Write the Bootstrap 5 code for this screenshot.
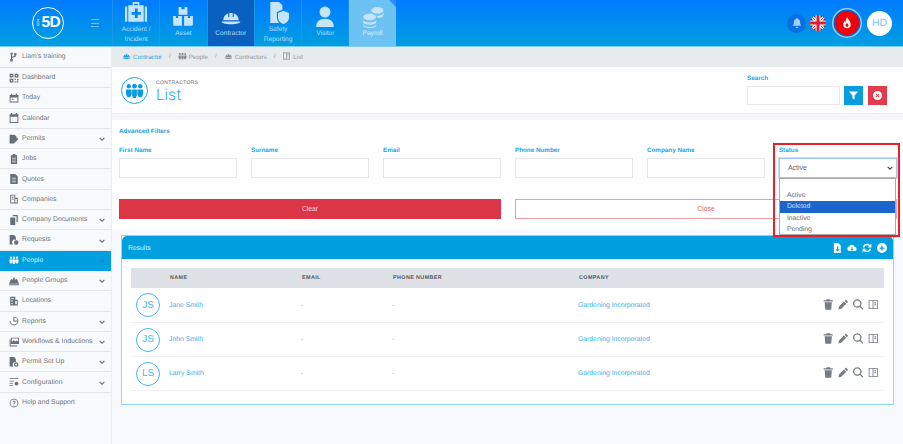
<!DOCTYPE html>
<html lang="en">
<head>
<meta charset="utf-8">
<title>Contractors List</title>
<link rel="stylesheet" href="https://cdn.jsdelivr.net/npm/bootstrap@5.3.0/dist/css/bootstrap.min.css">
<style>
html,body{height:100%;overflow:hidden}
body{font-family:"Liberation Sans",Arial,sans-serif;font-size:7px;background:#f7f9fc;color:#5b6470;width:903px;height:444px;text-rendering:geometricPrecision}
.topbar{height:47px;background:linear-gradient(180deg,#007bff 0%,#009fe0 100%);border-bottom:1px solid #7fcdf0}
.logo-zone{width:112px;padding-left:32px}
.logo-ring{width:32px;height:32px;border:1.5px solid #fff;color:#fff;font-size:15.5px;font-weight:700;letter-spacing:-.6px;padding-left:3px;flex:none}
.logo-ring i{font-style:normal;font-size:3px;writing-mode:vertical-rl;transform:rotate(180deg);font-weight:400;letter-spacing:0;margin-right:1px}
.burger{width:8px;height:8px;border-top:1px solid #7fbdf3;border-bottom:1px solid #7fbdf3;margin-left:27px;position:relative;flex:none}
.burger::after{content:"";position:absolute;left:0;right:0;top:2.500px;border-top:1px solid #7fbdf3}
.mod{width:47.3px;height:46px;border-left:1px solid #1b95e8;color:#b5def9;font-size:6.6px;line-height:10px;text-align:center}
.mod svg{width:22px;height:22px;fill:#c6e5fb;flex:none}
.mod-ico{height:25px;padding-top:2px}
.mod-low{height:29px;padding-top:6px}
.mod-cap{height:20px}
.mod-dark{background:#0a60bf}
.mod-light{background:#6cc2f2;position:relative;color:#d8effc}
.mod-light::after{content:"";position:absolute;right:0;top:0;border-style:solid;border-width:0 7px 7px 0;border-color:transparent #2f8df0 transparent transparent}
.top-right{padding-right:11px}
.bell{width:19px;height:19px;background:#0a6fe4}
.bell svg{width:10px;height:10px;fill:#9fd0f8}
.flag{width:16px;height:16px;margin-left:4px;overflow:hidden}
.fire{width:24px;height:24px;background:#f00008;box-shadow:0 0 0 1.5px #0c5fc4,0 0 0 3px #8fd0f5;margin-left:9px}
.fire svg{width:12px;height:12px;fill:#fff}
.hd{width:25px;height:25px;background:#fff;color:#7cc4f2;font-size:10.5px;margin-left:8px;padding-top:2px}
.side{width:112px;flex:none;background:#f7f9fc;border-right:1px solid #eceef1;height:397px}
.side-item{height:20.3px;padding:1px 6px 0 9px;background:#f8f9fb;border:0;border-bottom:1px solid #e4e6e9;border-radius:0;color:#6f7780;font-size:6.8px;display:flex;align-items:center}
.side-first{border-bottom:2px solid #d7d9dc;height:21px}
.side-item svg.ico{width:10px;height:10px;margin-right:3px;margin-top:-1px;fill:#666e78;flex:none}
.side-item .chev{width:6px;height:6px;margin-left:auto;fill:none;stroke:#6b7480;stroke-width:2}
.side-on{background:#00a0e0;color:#d5effb;border-bottom-color:#00a0e0}
.side-on svg.ico{fill:#fff}
.side-on .chev{stroke:#2a7fb5}
.crumbs{height:20px;background:#e8ebee;padding-left:10px;font-size:6.2px;color:#9299a1;gap:4px}
.crumbs svg{width:9px;height:8px;fill:#868e96;margin-right:2px;vertical-align:-1px}
.crumbs .here{color:#33a5e0}
.crumbs .here svg{fill:#1a9bdc}
.crumbs .spl{margin:0 3px}
.head-zone{height:46px;background:#fff;padding:0 16px 0 9px}
.head-ring{width:27px;height:27px;border:1.2px solid #1fa5e4}
.head-ring svg{width:19px;height:19px;fill:#0d9bdf}
.head-over{font-size:5px;letter-spacing:.35px;color:#666;line-height:6px;margin-top:2px}
.head-title{font-size:16px;line-height:17px;color:#27a7e5;font-family:Roboto,"Liberation Sans",sans-serif;font-weight:300}
.lab{display:block;color:#1ea4e4;font-weight:700;font-size:6.3px;line-height:8px;margin-bottom:3px}
.lab-adv{margin-bottom:11px}
.srch-in{width:93px;height:19px;border:1px solid #e8ebee}
.sq{width:19px;height:19px;margin-left:4px;padding:0;border:0;border-radius:0}
.sq-blue{background:#0a9ddb}
.sq-red{background:#e23b4c;margin-left:5px}
.sq svg{width:9px;height:9px;fill:#fff}
.gap-band{height:7px;background:#f4f6f9;border-top:1px solid #eceef1}
.filters{height:109px;background:#fff;padding:8px 6px 0 7px}
.flt-row{--bs-gutter-x:14px;margin:0 -7px}
.flt-btns{margin-top:21px}
.flt-in{height:20px;border:1px solid #e6e8ec;border-radius:0;padding:0 8px;font-size:7px;background-color:#fff;color:#666}
.flt-sel{border-color:#9fc5f0;box-shadow:0 0 0 1px #c9e0fb;background-image:url("data:image/svg+xml,%3csvg xmlns='http://www.w3.org/2000/svg' viewBox='0 0 16 16'%3e%3cpath fill='none' stroke='%23444' stroke-width='3' d='M2 5l6 6 6-6'/%3e%3c/svg%3e");background-size:6px 6px;background-position:right 3px center}
.pick{position:absolute;left:7px;top:31px;width:117px;height:57px;background:#fff;border:1px solid #a9a9a9;padding-top:11px;box-sizing:border-box;z-index:3}
.pick div{height:11.3px;line-height:11.3px;padding-left:7px;color:#6a6a6a;font-size:6.8px}
.pick .sel{background:#1a66cc;color:#cfe0f6}
.redbox{position:absolute;left:1px;top:-4px;width:127px;height:94px;border:2px solid #e8202a;z-index:4;pointer-events:none}
.btn-clear{height:20px;background:#dc3545;color:#f7d5d8;border:0;border-radius:0;font-size:6.8px;padding:0}
.btn-close2{height:20px;background:#fff;color:#e0606c;border:1px solid #eda0a7;border-radius:0;font-size:6.8px;padding:0}
.res-wrap{padding:6px 9px 0 9px}
.res-card{height:170px;border:1px solid #8fd6f5;border-radius:0;background:#fff}
.res-head{height:23px;background:#00a0e0;color:#d6f0fc;border:0;border-radius:0;padding:0 6px;font-size:6.8px}
.res-head svg{width:10px;height:10px;fill:#fff;margin-left:5px}
.res-body{padding:9px 9px 0 9px}
.res-tbl{margin:0;font-size:6.8px;--bs-table-bg:transparent}
.res-tbl th{height:20px;background:#dee1e6;border:0;padding:1px 0 0 1px;vertical-align:middle;font-size:5.4px;letter-spacing:.4px;color:#555b63;font-weight:700}
.res-tbl td{height:34px;padding:2px 0 0;vertical-align:middle;border-bottom:1.5px solid #eff0f2;color:#9aa0a6}
.res-tbl .c1{width:38px}.res-tbl .c2{width:132px}.res-tbl .c3{width:91px}.res-tbl .c4{width:186px}
.ava{width:24px;height:24px;border:1.2px solid #45b6ee;color:#45b6ee;font-size:10px;margin-left:5px;margin-top:-1px}
.who{color:#3cb0e8;text-decoration:none}
.acts{padding-right:6px!important;text-align:right}
.acts svg{width:10.500px;height:11px;fill:#767d85;margin-left:4.500px;vertical-align:middle;margin-top:-2px}
</style>
</head>
<body>
<svg width="0" height="0" class="position-absolute">
<symbol id="i-people" viewBox="0 0 20 16"><circle cx="4" cy="3.5" r="2.3"/><circle cx="10" cy="3.5" r="2.5"/><circle cx="16" cy="3.5" r="2.3"/><path d="M1 7h6v5l-1.500 3h-3L1 12zM7.500 7h5v6l-1 3h-3l-1-3zM13 7h6v5l-1.500 3h-3L13 12z"/></symbol>
<symbol id="i-hat" viewBox="0 0 20 16"><path d="M3 11a7 7 0 0 1 4.500-6.500V8h1V4.300h3V8h1V4.500A7 7 0 0 1 17 11zM1.500 12h17c0 1.500-3 2.500-8.500 2.500S1.500 13.500 1.500 12z"/></symbol>
<symbol id="i-grid" viewBox="0 0 16 16"><path d="M1 1h6v6H1zm2 2v2h2V3zm6-2h6v6H9zm2 2v2h2V3zM1 9h6v6H1zm2 2v2h2v-2zm6-2h2v2H9zm4 0h2v3h-2zm-4 4h2v2H9zm3 0h3v2h-3z"/></symbol>
<symbol id="i-branch" viewBox="0 0 16 16"><path d="M3 1h3v3H5v3.500c1.500-.8 3-1 4-1.500V5H8V2h4v3h-1v2c-2 1-5 1-6 3v1h1v4H2v-4h1V4H2z"/></symbol>
<symbol id="i-cal2" viewBox="0 0 16 16"><path d="M3 1h2v2h6V1h2v2h2v12H1V3h2zM2.500 7v6.500h11V7zM5 9h2v2H5z"/></symbol>
<symbol id="i-cal" viewBox="0 0 16 16"><path d="M3 0h2v2h6V0h2v2h2v14H1V2h2zM2.500 6v8.500h11V6z"/></symbol>
<symbol id="i-permit" viewBox="0 0 16 16"><path d="M1 1h8l3 3v3L7 12v3H1zM13 6l2 2-7 7H6v-2z"/></symbol>
<symbol id="i-clip" viewBox="0 0 16 16"><path d="M6 0h4v2h3v14H3V2h3zM5 6v1h6V6zm0 3v1h6V9zm0 3v1h6v-1z"/></symbol>
<symbol id="i-doc" viewBox="0 0 16 16"><path d="M2 0h8l4 4v12H2zM5 6v1h6V6zm0 3v1h6V9zm0 3v1h6v-1z"/></symbol>
<symbol id="i-comp" viewBox="0 0 16 16"><path d="M2 1h8v5h4v9H2zm1.500 1.500V13.500h5V2.500zM5 4h2v2H5zm0 3h2v2H5zm5 1v5.500h2.500V8z"/></symbol>
<symbol id="i-docs" viewBox="0 0 16 16"><path d="M6 0h8v11h-2V2H6zM2 4h8v12H2z"/></symbol>
<symbol id="i-req" viewBox="0 0 16 16"><path d="M1 0h7l3 3v5a4 4 0 0 0-4 7H1z"/><circle cx="11.500" cy="12" r="3.500"/></symbol>
<symbol id="i-group" viewBox="0 0 18 16"><path d="M9 1l3 5 2-2 4 9H0l4-9 2 2zM0 14h18v1.500H0z"/></symbol>
<symbol id="i-loc" viewBox="0 0 16 16"><path d="M2 1h8v5h4v9H2zm2 2v2h2V3zm3 0v2h1V3zM4 7v2h2V7zm0 4v2h2v-2zm6-3v5h2.500V8z" fill-rule="evenodd"/></symbol>
<symbol id="i-rep" viewBox="0 0 16 16"><path d="M8 1a7 7 0 1 1-7 7h1.500A5.500 5.500 0 1 0 8 2.500zM7 1v7.800h7V7.300H8.500V1z"/></symbol>
<symbol id="i-img" viewBox="0 0 16 16"><path d="M3 1h13v10H3zm1.500 1.500v5l3-2.500 2.500 2 2-1.500 2.500 2v-5zM1 4v11h12v-1.500H2.500V4z"/></symbol>
<symbol id="i-set" viewBox="0 0 16 16"><path d="M1 0h7l3 3v5.200a4 4 0 0 0-3.800 6.800H1z"/><path d="M11.500 8.500a3.500 3.500 0 1 0 0 7 3.500 3.500 0 0 0 0-7zm0 2a1.500 1.500 0 1 1 0 3 1.500 1.500 0 0 1 0-3z" fill-rule="evenodd"/></symbol>
<symbol id="i-cfg" viewBox="0 0 16 16"><path d="M1 2h14v1.300H1zm0 4h7v1.300H1zm0 4h5v1.300H1zm0 3h5v1.300H1z"/><circle cx="12" cy="10.500" r="3"/></symbol>
<symbol id="i-help" viewBox="0 0 16 16"><path d="M8 1a7 7 0 1 1 0 14A7 7 0 0 1 8 1zm0 1.300a5.700 5.700 0 1 0 0 11.400A5.700 5.700 0 0 0 8 2.300zM5.800 6.300C6 5 7 4.300 8.200 4.300c1.300 0 2.300.8 2.300 2 0 1.800-1.900 1.700-1.900 3.200H7.300c0-2.100 1.900-2 1.900-3.200 0-.5-.4-.8-1-.8s-1 .3-1.100.8zM7.300 10.500h1.300v1.300H7.300z"/></symbol>
<symbol id="i-chev" viewBox="0 0 10 10"><path d="M1 3l4 4 4-4"/></symbol>
<symbol id="i-trash" viewBox="0 0 16 16"><path d="M5.500 0h5l.7 1.500H15V3.500H1V1.500h3.800zM2.500 4.500h11L12.500 16h-9z"/></symbol>
<symbol id="i-pen" viewBox="0 0 16 16"><path d="M12 .5l3.500 3.500-2 2L10 2.500zM9 3.500L12.500 7 5 14.500 .5 15.500 1.500 11z"/></symbol>
<symbol id="i-search" viewBox="0 0 16 16"><path d="M6.500 0a6.500 6.500 0 0 1 5.200 10.400l4.300 4.200-1.400 1.400-4.200-4.300A6.500 6.500 0 1 1 6.500 0zm0 2a4.500 4.500 0 1 0 0 9 4.500 4.500 0 0 0 0-9z"/></symbol>
<symbol id="i-cols" viewBox="0 0 16 16"><path d="M1 1h14v14H1zm1.300 1.300v11.400h4.700V2.300zm6 0v11.400h5.400V2.300zM10 4h2v2h-2zm0 3h2v2h-2z" fill-rule="evenodd"/></symbol>
</svg>

<header class="topbar d-flex align-items-start">
  <div class="logo-zone d-flex align-items-center h-100">
    <div class="logo-ring rounded-circle d-flex align-items-center"><i>NOW</i>5D</div>
    <div class="burger"></div>
  </div>
  <div class="mod"><div class="mod-ico"><svg viewBox="0 0 20 20"><path d="M7 0h6v3h4v15H3V3h4zM8.300 1.500V3h3.400V1.500zM9 6v3H6v2.500h3v3h2.500v-3h3V9h-3V6zM0 4h2v14H0zM18 4h2v14h-2z" fill-rule="evenodd"/></svg></div><div class="mod-cap">Accident /<br>Incident</div></div>
  <div class="mod"><div class="mod-ico mod-low"><svg viewBox="0 0 20 20"><path d="M6 1h2.500v2h3V1H14v7H6zM1 9h2.500v2h2V9H9v9H2a1 1 0 0 1-1-1zM11 9h3.500v2h2V9H19v8a1 1 0 0 1-1 1h-7z"/></svg></div><div class="mod-cap">Asset</div></div>
  <div class="mod mod-dark"><div class="mod-ico mod-low"><svg><use href="#i-hat"/></svg></div><div class="mod-cap">Contractor</div></div>
  <div class="mod"><div class="mod-ico"><svg viewBox="0 0 20 20"><path d="M3 0h8l3 3v4l-5 2v5c0 2 1 3.500 2 5H3z"/><path d="M15 8l5 2v4c0 3-2.500 5-5 6-2.500-1-5-3-5-6v-4z"/></svg></div><div class="mod-cap">Safety<br>Reporting</div></div>
  <div class="mod"><div class="mod-ico mod-low"><svg viewBox="0 0 20 20"><circle cx="10" cy="5.500" r="5"/><path d="M2 19c0-5 3-7.500 8-7.500s8 2.500 8 7.500z"/></svg></div><div class="mod-cap">Visitor</div></div>
  <div class="mod mod-light"><div class="mod-ico mod-low"><svg viewBox="0 0 20 20"><ellipse cx="14" cy="4" rx="5.500" ry="3"/><path d="M8.500 6c.5 2 3 3 5.500 3s5-1 5.500-3v2c0 2-2.500 3-5 3-.5-2-3-3-6-3zM1 10c0-1.500 3-3 6-3s6 1.500 6 3-3 3-6 3-6-1.500-6-3zM1 12.500c.5 1.500 3 2.500 6 2.500s5.500-1 6-2.500v2c0 1.500-3 2.500-6 2.500s-6-1-6-2.500zM1 16.500c.5 1.500 3 2.500 6 2.500s5.500-1 6-2.500v1c0 1.500-3 2.500-6 2.500s-6-1-6-2.500z"/></svg></div><div class="mod-cap">Payroll</div></div>
  <div class="top-right ms-auto d-flex align-items-center h-100">
    <div class="bell rounded-circle d-flex align-items-center justify-content-center"><svg viewBox="0 0 16 16"><path d="M8 0a1.500 1.500 0 0 1 1.500 1.500C12 2.200 13 4.500 13 7c0 3 1 4 2 5.500H1C2 11 3 10 3 7c0-2.500 1-4.800 3.500-5.500A1.500 1.500 0 0 1 8 0zM6 14h4a2 2 0 0 1-4 0z"/></svg></div>
    <svg class="flag rounded-circle" viewBox="0 0 16 16"><rect width="16" height="16" fill="#2a3f7a"/><path d="M0 0l16 16M16 0L0 16" stroke="#fff" stroke-width="3"/><path d="M0 0l16 16M16 0L0 16" stroke="#d8202f" stroke-width="1"/><path d="M8 0v16M0 8h16" stroke="#fff" stroke-width="5"/><path d="M8 0v16M0 8h16" stroke="#d8202f" stroke-width="3"/></svg>
    <div class="fire rounded-circle d-flex align-items-center justify-content-center"><svg viewBox="0 0 16 16"><path d="M8 0c1 3 5 5 5 10a5 5 0 0 1-10 0c0-2 1-3.500 2-5 0 1.500.5 2 1 2.500C6 5 7 2.500 8 0zm0 8c-1 1-2 2-2 3a2 2 0 0 0 4 0c0-1-1-2-2-3z" fill-rule="evenodd"/></svg></div>
    <div class="hd rounded-circle d-flex align-items-center justify-content-center">HD</div>
  </div>
</header>

<div class="d-flex">
  <nav class="side list-group list-group-flush">
    <a class="side-item side-first list-group-item"><svg class="ico"><use href="#i-branch"/></svg>Liam's training</a>
    <a class="side-item list-group-item"><svg class="ico"><use href="#i-grid"/></svg>Dashboard</a>
    <a class="side-item list-group-item"><svg class="ico"><use href="#i-cal2"/></svg>Today</a>
    <a class="side-item list-group-item"><svg class="ico"><use href="#i-cal"/></svg>Calendar</a>
    <a class="side-item list-group-item"><svg class="ico"><use href="#i-permit"/></svg>Permits<svg class="chev"><use href="#i-chev"/></svg></a>
    <a class="side-item list-group-item"><svg class="ico"><use href="#i-clip"/></svg>Jobs</a>
    <a class="side-item list-group-item"><svg class="ico"><use href="#i-doc"/></svg>Quotes</a>
    <a class="side-item list-group-item"><svg class="ico"><use href="#i-comp"/></svg>Companies</a>
    <a class="side-item list-group-item"><svg class="ico"><use href="#i-docs"/></svg>Company Documents<svg class="chev"><use href="#i-chev"/></svg></a>
    <a class="side-item list-group-item"><svg class="ico"><use href="#i-req"/></svg>Requests<svg class="chev"><use href="#i-chev"/></svg></a>
    <a class="side-item side-on list-group-item"><svg class="ico"><use href="#i-people"/></svg>People<svg class="chev"><use href="#i-chev"/></svg></a>
    <a class="side-item list-group-item"><svg class="ico"><use href="#i-group"/></svg>People Groups<svg class="chev"><use href="#i-chev"/></svg></a>
    <a class="side-item list-group-item"><svg class="ico"><use href="#i-loc"/></svg>Locations</a>
    <a class="side-item list-group-item"><svg class="ico"><use href="#i-rep"/></svg>Reports<svg class="chev"><use href="#i-chev"/></svg></a>
    <a class="side-item list-group-item"><svg class="ico"><use href="#i-img"/></svg>Workflows &amp; Inductions<svg class="chev"><use href="#i-chev"/></svg></a>
    <a class="side-item list-group-item"><svg class="ico"><use href="#i-set"/></svg>Permit Set Up<svg class="chev"><use href="#i-chev"/></svg></a>
    <a class="side-item list-group-item"><svg class="ico"><use href="#i-cfg"/></svg>Configuration<svg class="chev"><use href="#i-chev"/></svg></a>
    <a class="side-item list-group-item"><svg class="ico"><use href="#i-help"/></svg>Help and Support</a>
  </nav>

  <main class="flex-grow-1">
    <div class="crumbs d-flex align-items-center">
      <span class="here"><svg><use href="#i-hat"/></svg>Contractor</span><span class="spl">/</span>
      <span><svg><use href="#i-people"/></svg>People</span><span class="spl">/</span>
      <span><svg><use href="#i-hat"/></svg>Contractors</span><span class="spl">/</span>
      <span><svg><use href="#i-cols"/></svg>List</span>
    </div>
    <div class="head-zone d-flex align-items-center justify-content-between">
      <div class="d-flex align-items-center">
        <div class="head-ring rounded-circle d-flex align-items-center justify-content-center"><svg><use href="#i-people"/></svg></div>
        <div class="ms-2">
          <div class="head-over">CONTRACTORS</div>
          <div class="head-title">List</div>
        </div>
      </div>
      <div>
        <span class="lab">Search</span>
        <div class="d-flex">
          <input class="srch-in" type="text" aria-label="Search">
          <button class="btn sq sq-blue d-flex align-items-center justify-content-center" aria-label="Filter"><svg viewBox="0 0 16 16"><path d="M0 1h16l-6 7v7l-4-2V8z"/></svg></button>
          <button class="btn sq sq-red d-flex align-items-center justify-content-center" aria-label="Reset"><svg viewBox="0 0 16 16"><path d="M8 0a8 8 0 1 1 0 16A8 8 0 0 1 8 0zM5.500 4.300L4.300 5.500 6.800 8l-2.500 2.500 1.200 1.200L8 9.200l2.500 2.500 1.200-1.200L9.200 8l2.500-2.500-1.200-1.200L8 6.800z" fill-rule="evenodd"/></svg></button>
        </div>
      </div>
    </div>
    <div class="gap-band"></div>
    <section class="filters">
      <span class="lab lab-adv">Advanced Filters</span>
      <div class="row flt-row">
        <div class="col-2"><span class="lab">First Name</span><input class="form-control flt-in" aria-label="First Name"></div>
        <div class="col-2"><span class="lab">Surname</span><input class="form-control flt-in" aria-label="Surname"></div>
        <div class="col-2"><span class="lab">Email</span><input class="form-control flt-in" aria-label="Email"></div>
        <div class="col-2"><span class="lab">Phone Number</span><input class="form-control flt-in" aria-label="Phone Number"></div>
        <div class="col-2"><span class="lab">Company Name</span><input class="form-control flt-in" aria-label="Company Name"></div>
        <div class="col-2 position-relative">
          <span class="lab">Status</span>
          <select class="form-select flt-in flt-sel" aria-label="Status"><option>Active</option></select>
          <div class="pick"><div>Active</div><div class="sel">Deleted</div><div>Inactive</div><div>Pending</div></div>
          <div class="redbox"></div>
        </div>
      </div>
      <div class="row flt-row flt-btns">
        <div class="col-6"><button class="btn btn-clear w-100">Clear</button></div>
        <div class="col-6"><button class="btn btn-close2 w-100">Close</button></div>
      </div>
    </section>
    <div class="res-wrap">
      <div class="card res-card">
        <div class="card-header res-head d-flex align-items-center justify-content-between">
          <span class="pt-1">Results</span>
          <span class="d-flex">
            <svg viewBox="0 0 16 16"><path d="M3 0h7l4 4v12H3zM8 5v5H5.500L9 13.500 12.500 10H10V5z" fill-rule="evenodd"/></svg>
            <svg class="cloud-ico" viewBox="0 0 20 16"><path d="M5 14a4.500 4.500 0 0 1-.8-8.900A6 6 0 0 1 15.500 6 4 4 0 0 1 15 14zM9 6v4H6.500l3.500 3.500 3.500-3.500H11V6z" fill-rule="evenodd"/></svg>
            <svg viewBox="0 0 16 16"><path d="M8 1c2 0 3.700.9 4.800 2.200L15 1v6H9l2.200-2.200A4.500 4.500 0 0 0 3.700 7H1.300A7 7 0 0 1 8 1zM1 9h6l-2.200 2.200A4.500 4.500 0 0 0 12.300 9h2.400A7 7 0 0 1 3.200 12.800L1 15z"/></svg>
            <svg viewBox="0 0 16 16"><path d="M8 0a8 8 0 1 1 0 16A8 8 0 0 1 8 0zM7 4v3H4v2h3v3h2V9h3V7H9V4z" fill-rule="evenodd"/></svg>
          </span>
        </div>
        <div class="card-body res-body">
          <table class="table res-tbl">
            <thead><tr><th class="c1"></th><th class="c2">NAME</th><th class="c3">EMAIL</th><th class="c4">PHONE NUMBER</th><th>COMPANY</th><th></th></tr></thead>
            <tbody>
              <tr><td><div class="ava rounded-circle d-flex align-items-center justify-content-center">JS</div></td><td><a class="who">Jane Smith</a></td><td>-</td><td>-</td><td><a class="who">Gardening Incorporated</a></td><td class="acts"><svg><use href="#i-trash"/></svg><svg><use href="#i-pen"/></svg><svg><use href="#i-search"/></svg><svg><use href="#i-cols"/></svg></td></tr>
              <tr><td><div class="ava rounded-circle d-flex align-items-center justify-content-center">JS</div></td><td><a class="who">John Smith</a></td><td>-</td><td>-</td><td><a class="who">Gardening Incorporated</a></td><td class="acts"><svg><use href="#i-trash"/></svg><svg><use href="#i-pen"/></svg><svg><use href="#i-search"/></svg><svg><use href="#i-cols"/></svg></td></tr>
              <tr><td><div class="ava rounded-circle d-flex align-items-center justify-content-center">LS</div></td><td><a class="who">Larry Smith</a></td><td>-</td><td>-</td><td><a class="who">Gardening Incorporated</a></td><td class="acts"><svg><use href="#i-trash"/></svg><svg><use href="#i-pen"/></svg><svg><use href="#i-search"/></svg><svg><use href="#i-cols"/></svg></td></tr>
            </tbody>
          </table>
        </div>
      </div>
    </div>
  </main>
</div>
<script src="https://cdn.jsdelivr.net/npm/bootstrap@5.3.0/dist/js/bootstrap.bundle.min.js"></script>
</body>
</html>
